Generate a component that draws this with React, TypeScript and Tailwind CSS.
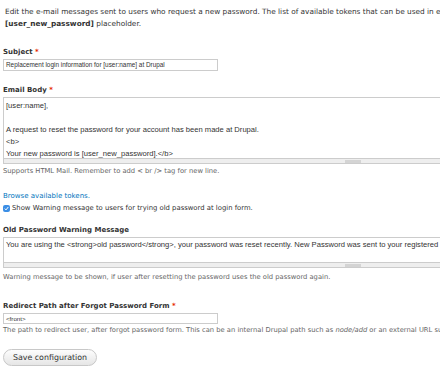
import React from "react";

const Req = () => <span className="text-[#e62600]"> *</span>;

function Grippie() {
  return (
    <div className="h-[5px] border border-t-0 border-[#ccc] bg-[#eee] flex justify-center items-center">
      <div className="w-[16px] h-[3px] bg-[#d4d4d4]" />
    </div>
  );
}

const helvetica = { fontFamily: '"Liberation Sans", Arial, sans-serif' };

export default function App() {
  return (
    <div
      className="w-[440px] h-[373px] overflow-hidden bg-white text-[#333] text-[7px] leading-[12px]"
      style={{ fontFamily: '"DejaVu Sans", "Lucida Grande", sans-serif' }}
    >
      <div className="w-[706px] pl-[3px] pt-[6px]">
        <p className="pl-[2px] whitespace-nowrap text-[7.35px]">
          Edit the e-mail messages sent to users who request a new password. The list of available tokens that can be used in e-mails is provided below. For the new password, use the
          <br />
          <b>[user_new_password]</b> placeholder.
        </p>

        <div className="mt-[16px] font-bold leading-[12px]">
          Subject<Req />
        </div>
        <div
          className="mt-[1px] w-[215px] h-[12px] border border-[#ccc] px-[2px] text-[6.4px] leading-[10px] text-[#333]"
          style={helvetica}
        >
          Replacement login information for [user:name] at Drupal
        </div>

        <div className="mt-[13px] font-bold">
          Email Body<Req />
        </div>
        <div
          className="mt-[1px] w-[700px] h-[62px] border border-[#ccc] px-[2px] pt-[2px] text-[7.6px] leading-[12px]"
          style={helvetica}
        >
          [user:name],
          <br />
          <br />
          A request to reset the password for your account has been made at Drupal.
          <br />
          &lt;b&gt;
          <br />
          Your new password is [user_new_password].&lt;/b&gt;
        </div>
        <div className="w-[700px]">
          <Grippie />
        </div>
        <div className="mt-[1px] text-[#666] text-[6.75px]">
          Supports HTML Mail. Remember to add &lt; br /&gt; tag for new line.
        </div>

        <div className="mt-[13px] text-[#0074bd]">Browse available tokens.</div>
        <div className="flex items-center gap-[2px]">
          <span className="w-[7px] h-[7px] rounded-[2px] bg-[#3b8ee5] flex items-center justify-center">
            <svg width="5" height="5" viewBox="0 0 10 10">
              <path d="M1.5 5.2 L4 7.8 L8.6 2" stroke="white" strokeWidth="2" fill="none" />
            </svg>
          </span>
          <span className="text-[6.85px]">Show Warning message to users for trying old password at login form.</span>
        </div>

        <div className="mt-[10px] font-bold">Old Password Warning Message</div>
        <div
          className="mt-[1px] w-[700px] h-[26px] border border-[#ccc] px-[2px] pt-[1px] text-[7.6px] leading-[12px] whitespace-nowrap"
          style={helvetica}
        >
          You are using the &lt;strong&gt;old password&lt;/strong&gt;, your password was reset recently. New Password was sent to your registered e-mail address.
        </div>
        <div className="w-[700px]">
          <Grippie />
        </div>
        <div className="mt-[3px] text-[#666] text-[6.75px]">
          Warning message to be shown, if user after resetting the password uses the old password again.
        </div>

        <div className="mt-[17px] font-bold">
          Redirect Path after Forgot Password Form<Req />
        </div>
        <div
          className="mt-[1px] w-[215px] h-[11px] border border-[#ccc] px-[2px] text-[6.2px] leading-[9px]"
          style={helvetica}
        >
          &lt;front&gt;
        </div>
        <div className="text-[#666] text-[6.75px] whitespace-nowrap">
          The path to redirect user, after forgot password form. This can be an internal Drupal path such as <i>node/add</i> or an external URL such as http://drupal.org.
        </div>

        <button className="mt-[13px] w-[94px] h-[17px] rounded-full border border-[#c8c8c8] bg-gradient-to-b from-[#fdfdfd] to-[#e6e6e6] text-[7.9px] text-[#333] leading-[15px]">
          Save configuration
        </button>
      </div>
    </div>
  );
}
